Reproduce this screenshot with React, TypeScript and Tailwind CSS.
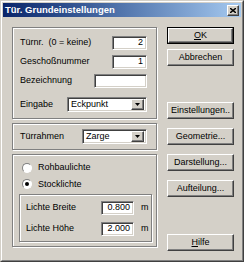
import React from 'react';

const raised =
  'border border-t-white border-l-white border-r-[#404040] border-b-[#404040] shadow-[inset_-1px_-1px_0_#808080]';
const sunken =
  'border border-t-[#808080] border-l-[#808080] border-r-white border-b-white shadow-[inset_1px_1px_0_#404040,inset_-1px_-1px_0_#d4d0c8]';
const etched = 'border border-[#808080] shadow-[inset_1px_1px_0_#fff,1px_1px_0_#fff]';

function TextBox({ value, className }: { value?: string; className: string }) {
  return (
    <div className={`${sunken} bg-white h-[14px] flex items-center justify-end pr-[3px] ${className}`}>
      {value}
    </div>
  );
}

function Combo({ value, className }: { value: string; className: string }) {
  return (
    <div className={`${sunken} bg-white h-[15px] flex items-center pl-[3px] pr-[2px] ${className}`}>
      <span className="flex-1">{value}</span>
      <div className={`${raised} bg-[#d4d0c8] w-[13px] h-[11px] flex items-center justify-center`}>
        <svg width="5" height="3" viewBox="0 0 5 3">
          <path d="M0 0h5L2.5 3z" fill="#000" />
        </svg>
      </div>
    </div>
  );
}

function Button({ children, def, className = '' }: { children: React.ReactNode; def?: boolean; className?: string }) {
  const inner = (
    <div className={`${raised} bg-[#d4d0c8] h-full flex items-center justify-center`}>{children}</div>
  );
  return def ? (
    <div className={`border border-black h-[17px] ${className}`}>{inner}</div>
  ) : (
    <div className={`h-[17px] ${className}`}>{inner}</div>
  );
}

function Radio({ checked, label }: { checked?: boolean; label: string }) {
  return (
    <div className="flex items-center gap-[6px]">
      <div className="w-[10px] h-[10px] rounded-full bg-white border border-t-[#808080] border-l-[#808080] border-r-white border-b-white flex items-center justify-center">
        {checked && <div className="w-[4px] h-[4px] rounded-full bg-black" />}
      </div>
      <span>{label}</span>
    </div>
  );
}

export default function App() {
  return (
    <div
      className="w-[244px] h-[262px] bg-[#d4d0c8] text-[9px] text-black border border-t-[#d4d0c8] border-l-[#d4d0c8] border-r-[#404040] border-b-[#404040]"
      style={{ fontFamily: '"Liberation Sans", Arial, sans-serif' }}
    >
      <div className="h-full border border-t-white border-l-white border-r-[#808080] border-b-[#808080] p-px flex flex-col">
        {/* Title bar */}
        <div className="h-[14px] bg-gradient-to-r from-[#0a246a] to-[#a6caf0] flex items-center pl-[2px] pr-[2px]">
          <span className="flex-1 text-white font-bold text-[9.5px]">Tür. Grundeinstellungen</span>
          <div className={`${raised} bg-[#d4d0c8] w-[12px] h-[11px] flex items-center justify-center`}>
            <svg width="6" height="5" viewBox="0 0 6 5">
              <path d="M0 0l6 5M6 0L0 5" stroke="#000" strokeWidth="1.4" />
            </svg>
          </div>
        </div>

        <div className="flex flex-1 pl-[9px] pt-[10px]">
          {/* Left column */}
          <div className="w-[145px] flex flex-col gap-[4px]">
            <div className={`${etched} h-[92px] flex flex-col pl-[7px] pr-[9px] pt-[8px] gap-[5px]`}>
              <div className="flex items-center justify-between">
                <span>Türnr.&nbsp; (0 = keine)</span>
                <TextBox value="2" className="w-[35px]" />
              </div>
              <div className="flex items-center justify-between">
                <span>Geschoßnummer</span>
                <TextBox value="1" className="w-[35px]" />
              </div>
              <div className="flex items-center justify-between">
                <span>Bezeichnung</span>
                <TextBox className="w-[53px]" />
              </div>
              <div className="flex items-center justify-between mt-[4px]">
                <span>Eingabe</span>
                <Combo value="Eckpunkt" className="w-[80px]" />
              </div>
            </div>

            <div className={`${etched} h-[27px] flex items-center justify-between pl-[7px] pr-[9px]`}>
              <span>Türrahmen</span>
              <Combo value="Zarge" className="w-[65px]" />
            </div>

            <div className={`${etched} h-[93px] flex flex-col pl-[9px] pr-[4px] pt-[6px]`}>
              <div className="flex flex-col gap-[3px]">
                <Radio label="Rohbaulichte" />
                <Radio checked label="Stocklichte" />
              </div>
              <div className={`${etched} mt-[3px] -ml-[3px] h-[48px] flex flex-col justify-center gap-[7px] pl-[6px] pr-[4px]`}>
                <div className="flex items-center">
                  <span className="flex-1">Lichte Breite</span>
                  <TextBox value="0.800" className="w-[33px]" />
                  <span className="w-[13px] pl-[7px]">m</span>
                </div>
                <div className="flex items-center">
                  <span className="flex-1">Lichte Höhe</span>
                  <TextBox value="2.000" className="w-[33px]" />
                  <span className="w-[13px] pl-[7px]">m</span>
                </div>
              </div>
            </div>
          </div>

          {/* Right column */}
          <div className="ml-[10px] w-[67px] flex flex-col">
            <Button def>
              <span>
                <span className="underline">O</span>K
              </span>
            </Button>
            <Button className="mt-[5px]">Abbrechen</Button>
            <Button className="mt-[36px]">Einstellungen..</Button>
            <Button className="mt-[9px]">Geometrie...</Button>
            <Button className="mt-[9px]">Darstellung...</Button>
            <Button className="mt-[9px]">Aufteilung...</Button>
            <Button className="mt-[37px]">
              <span>
                <span className="underline">H</span>ilfe
              </span>
            </Button>
          </div>
        </div>
      </div>
    </div>
  );
}
